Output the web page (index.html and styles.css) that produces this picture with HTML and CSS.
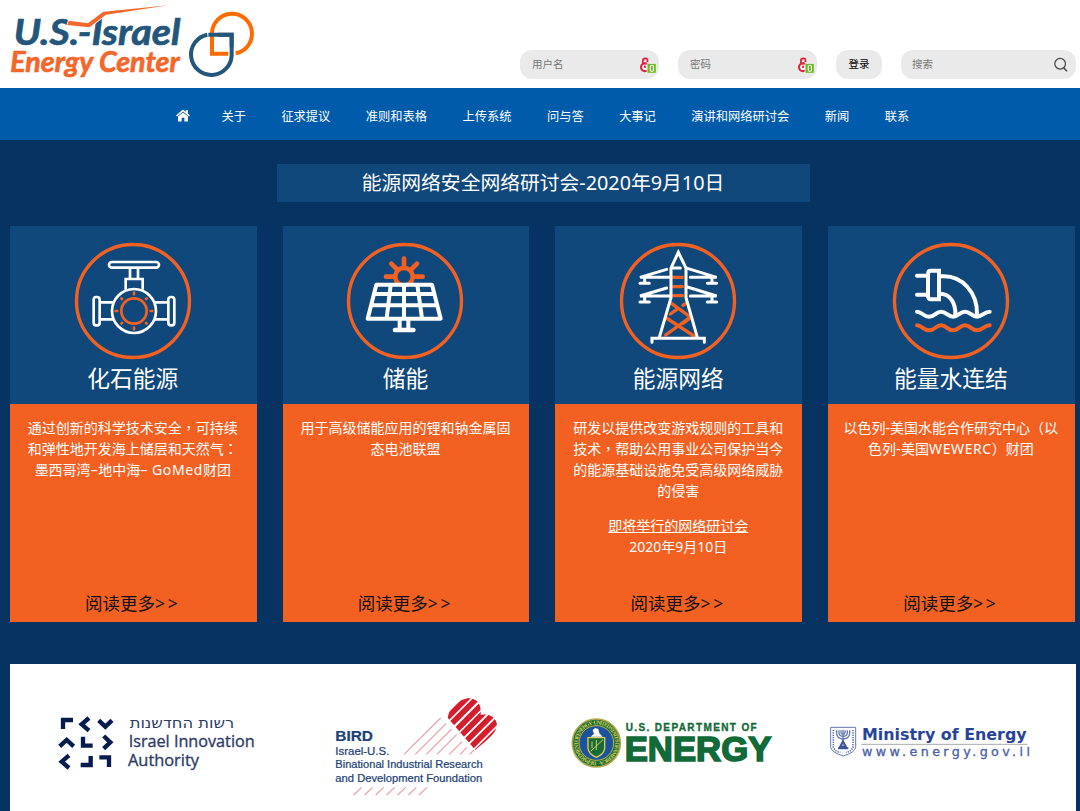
FILE: index.html
```html
<!DOCTYPE html>
<html lang="zh-CN">
<head>
<meta charset="utf-8">
<title>U.S.-Israel Energy Center</title>
<link rel="stylesheet" href="styles.css">
</head>
<body>
<header class="top">
  <svg class="logo" viewBox="0 0 810 264" width="270" height="88">
    <g font-family="Lato" font-weight="700" font-style="italic">
      <text x="41" y="136" font-size="106" fill="#24567c" stroke="#24567c" stroke-width="2" textLength="500" lengthAdjust="spacingAndGlyphs">U.S.-Israel</text>
      <text x="31" y="217" font-size="84" fill="#f4672b" stroke="#f4672b" stroke-width="2" textLength="508" lengthAdjust="spacingAndGlyphs">Energy Center</text>
    </g>
    <path d="M206 62 264 70 310 35 505 16 318 44 268 82 202 75Z" fill="#f4672b" stroke="#fff" stroke-width="5" paint-order="stroke"/>
    <g fill="none" stroke-width="12">
      <path d="M622 104A61 61 0 1 0 695 166V104H654" stroke="#24567c"/>
      <path d="M707 160A60 60 0 1 0 636 99V161H685" stroke="#ff6b00"/>
      <path d="M625 104H695V140" stroke="#24567c"/>
    </g>
  </svg>
  <form class="tools">
    <label class="field"><span>用户名</span>
      <svg class="lock" viewBox="0 0 48 48" width="17" height="17"><path d="M8 17V11Q8 4 15 4T21 11V14" fill="none" stroke="#e0203a" stroke-width="5"/><circle cx="14" cy="29" r="11" fill="#fff" stroke="#e0203a" stroke-width="6"/><path d="M14 24V31" stroke="#e0203a" stroke-width="5"/><path d="M20 18H46V46H20Z" fill="#6eb92b" stroke="#fff" stroke-width="2"/><rect x="29" y="24" width="9" height="16" rx="3" fill="none" stroke="#fff" stroke-width="3"/></svg>
    </label>
    <label class="field"><span>密码</span>
      <svg class="lock" viewBox="0 0 48 48" width="17" height="17"><path d="M8 17V11Q8 4 15 4T21 11V14" fill="none" stroke="#e0203a" stroke-width="5"/><circle cx="14" cy="29" r="11" fill="#fff" stroke="#e0203a" stroke-width="6"/><path d="M14 24V31" stroke="#e0203a" stroke-width="5"/><path d="M20 18H46V46H20Z" fill="#6eb92b" stroke="#fff" stroke-width="2"/><rect x="29" y="24" width="9" height="16" rx="3" fill="none" stroke="#fff" stroke-width="3"/></svg>
    </label>
    <button class="login" type="button">登录</button>
    <label class="field search"><span>搜索</span>
      <svg viewBox="0 0 42 45" width="15" height="16"><circle cx="20" cy="19" r="15" fill="none" stroke="#444" stroke-width="3.4"/><path d="M30 30 39 40" stroke="#444" stroke-width="4"/></svg>
    </label>
  </form>
</header>

<nav class="nav">
  <a class="home"><svg viewBox="0 0 42 38" width="14" height="13" fill="#fff"><path d="M0 19 18 3Q21 1 24 3L29 8V3H36V14L42 19 39 22 21 7 3 22Z"/><path d="M6 22 21 10 36 22V37H25V26H17V37H6Z"/></svg></a>
  <a>关于</a><a>征求提议</a><a>准则和表格</a><a>上传系统</a><a>问与答</a><a>大事记</a><a>演讲和网络研讨会</a><a>新闻</a><a>联系</a>
</nav>

<main class="main">
  <h1 class="banner">能源网络安全网络研讨会-2020年9月10日</h1>
  <section class="cards">
    <article class="card">
      <div class="head">
        <svg viewBox="219 64 360 360" width="120" height="120" fill="none" stroke="#fff" stroke-width="8">
          <circle cx="399" cy="244" r="169.500" stroke="#f26122" stroke-width="10"/>
          <rect x="327" y="127" width="150" height="17" rx="8.500"/>
          <path d="M390 146V177M414 146V177M377 210V178H428V210M300 248H342M300 299H342M462 248H504M462 299H504"/>
          <rect x="281" y="232" width="18" height="85" rx="8"/><rect x="505" y="232" width="18" height="85" rx="8"/>
          <circle cx="402" cy="274" r="66"/>
          <g stroke="#f26122"><circle cx="402" cy="274" r="38"/><path stroke-linecap="round" d="M402 219V224M402 324V329M347 274H352M452 274H457M364 236 366 238M440 236 438 238M364 312 366 310M440 312 438 310"/></g>
        </svg>
        <h2>化石能源</h2>
      </div>
      <div class="body"><p>通过创新的科学技术安全<i lang="zh-TW">，</i>可持续<br>和弹性地开发海上储层和天然气<i lang="zh-TW">：</i><br>墨西哥湾<span class="latin">–</span>地中海<span class="latin">– GoMed</span>财团</p><a class="more">阅读更多<span>&gt;&gt;</span></a></div>
    </article>
    <article class="card">
      <div class="head">
        <svg viewBox="213 64 360 360" width="120" height="120" fill="none" stroke="#fff" stroke-width="12" stroke-linecap="round" stroke-linejoin="round">
          <circle cx="393" cy="244" r="169.500" stroke="#f26122" stroke-width="10"/>
          <g stroke="#f26122" stroke-width="13"><circle cx="390" cy="171" r="26"/><path d="M390 117V138M352 132 368 148M429 132 413 148M336 171H360M422 171H446" stroke-width="14"/></g>
          <path d="M307 195H474L500 297H281ZM300 223H480M293 257H489M350 196 338 296M390 196V296M430 196 444 296M377 302V326M403 302V326"/><path d="M363 331H418" stroke-width="14"/>
        </svg>
        <h2>储能</h2>
      </div>
      <div class="body"><p>用于高级储能应用的锂和钠金属固<br>态电池联盟</p><a class="more">阅读更多<span>&gt;&gt;</span></a></div>
    </article>
    <article class="card">
      <div class="head">
        <svg viewBox="208 64 360 360" width="120" height="120" fill="none" stroke="#fff" stroke-width="9" stroke-linecap="round">
          <circle cx="388" cy="244" r="169.500" stroke="#f26122" stroke-width="10"/>
          <path stroke="#f26122" stroke-width="10" d="M374 173H401M374 201H401M374 228H401M365 249 421 289M365 283 388 267M403 257 412 251M353 295 439 351M351 346 423 294M403 311 421 298"/>
          <path d="M332 353 367 234V145L389 98 412 145V234L446 353M369 145H395M310 368V356H467V368M362 173H274L354 149M288 174V191M274 191H302M416 146 504 173H425M490 174V191M476 191H504M362 229H274L354 205M288 230V247M274 247H302M416 202 504 229H425M490 230V247M476 247H504"/>
        </svg>
        <h2>能源网络</h2>
      </div>
      <div class="body"><p>研发以提供改变游戏规则的工具和<br>技术<i lang="zh-TW">，</i>帮助公用事业公司保护当今<br>的能源基础设施免受高级网络威胁<br>的侵害</p><p><u>即将举行的网络研讨会</u><br>2020年9月10日</p><a class="more">阅读更多<span>&gt;&gt;</span></a></div>
    </article>
    <article class="card">
      <div class="head">
        <svg viewBox="216 64 360 360" width="120" height="120" fill="none" stroke="#fff" stroke-width="12" stroke-linecap="round">
          <circle cx="396" cy="244" r="169.500" stroke="#f26122" stroke-width="10"/>
          <path d="M360 153H336Q327 153 327 163V229Q327 239 336 239H360ZM294 168H326M294 225H326M366 170C430 165 476 220 474 285M366 222C393 224 411 250 409 287"/>
          <path d="M294 276C309 276 312 291 330 291S350 276 366 276 386 291 402 291 422 276 438 276 458 291 474 291 496 276 512 276"/>
          <path stroke="#f26122" d="M294 317C309 317 312 332 330 332S350 317 366 317 386 332 402 332 422 317 438 317 458 332 474 332 496 317 512 317"/>
        </svg>
        <h2>能量水连结</h2>
      </div>
      <div class="body"><p>以色列-美国水能合作研究中心<i lang="zh-TW">（</i>以<br>色列<span class="latin">-</span>美国<span class="latin">WEWERC</span><i lang="zh-TW">）</i>财团</p><a class="more">阅读更多<span>&gt;&gt;</span></a></div>
    </article>
  </section>

  <footer class="partners">
    <svg class="innovation" viewBox="0 0 720 330" width="240" height="110">
      <g fill="none" stroke="#061b4e" stroke-width="13">
        <path d="M69 117V90H99M147 84 125 103 147 122M176 91 196 110 216 91M59 169 80 150 101 169M129 140V167H158M191 138 211 157 191 176M87 196 65 215 87 234M152 198V225H122M178 202H207V231"/>
      </g>
      <g fill="#2d3b66" font-family="Open Sans, Noto Sans, sans-serif">
        <text x="269" y="115" font-size="42" font-family="DejaVu Sans, sans-serif" textLength="314" lengthAdjust="spacingAndGlyphs">רשות החדשנות</text>
        <text x="266" y="171" font-size="47" stroke="#2d3b66" textLength="378" lengthAdjust="spacingAndGlyphs">Israel Innovation</text>
        <text x="264" y="228" font-size="47" stroke="#2d3b66" textLength="213" lengthAdjust="spacingAndGlyphs">Authority</text>
      </g>
    </svg>
    <svg class="bird" viewBox="0 0 600 363" width="200" height="121">
      <defs><clipPath id="heart"><path d="M386 72C390 52 424 22 451 25 478 29 484 51 482 75 503 70 526 79 530 99 536 128 494 154 466 180L383 83Z"/></clipPath></defs>
      <g clip-path="url(#heart)" stroke="#d51d2c" stroke-width="17">
        <path d="M360 105 460 5M375 121 480 16M392 137 500 29M405 155 520 40M421 171 530 62M436 188 545 79M449 206 560 95"/>
      </g>
      <path d="M252 193 362 84M286 193 378 101M319 193 395 117M351 193 410 134M388 193 427 154M420 193 441 172M449 193 462 180M101 315 125 292M134 315 158 292M167 315 191 292M200 315 224 292M233 315 257 292M265 315 289 292M297 315 321 292" stroke="#eba0a6" stroke-width="3.500"/>
      <g fill="#1c4178" stroke="#1c4178" stroke-width=".7" font-family="Liberation Sans, sans-serif">
        <text x="46" y="153" font-size="46" font-weight="700" textLength="113" lengthAdjust="spacingAndGlyphs">BIRD</text>
        <text x="46" y="195" font-size="35" textLength="162" lengthAdjust="spacingAndGlyphs">Israel-U.S.</text>
        <text x="46" y="234" font-size="35" textLength="442" lengthAdjust="spacingAndGlyphs">Binational Industrial Research</text>
        <text x="46" y="275" font-size="35" textLength="441" lengthAdjust="spacingAndGlyphs">and Development Foundation</text>
      </g>
    </svg>
    <svg class="doe" viewBox="0 0 690 240" width="230" height="80">
      <defs><path id="ring" d="M109 185A56 56 0 1 1 110 185"/></defs>
      <circle cx="109" cy="129" r="72" fill="#176b36" stroke="#b5a84a" stroke-width="5"/>
      <text font-family="Liberation Serif, serif" font-weight="700" font-size="17" fill="#d8cc58"><textPath href="#ring" textLength="345">DEPARTMENT OF ENERGY · UNITED STATES OF AMERICA ·</textPath></text>
      <circle cx="109" cy="129" r="52" fill="#1d529f" stroke="#c4b649" stroke-width="3"/>
      <path d="M84 113H134V145Q132 163 109 172 86 163 84 145Z" fill="#176b36" stroke="#d8cc58" stroke-width="4"/>
      <path d="M92 154 129 119M109 120V150M96 125V145" stroke="#d8cc58" stroke-width="3"/>
      <path d="M92 110 102 101 98 91 105 84 115 87 118 100 128 110Z" fill="#fff"/>
      <g fill="#116a38" font-family="Liberation Sans, sans-serif" font-weight="700">
        <text x="197" y="93" font-size="30" stroke="#116a38" textLength="393">U.S. DEPARTMENT OF</text>
        <text x="194" y="184" font-size="107" textLength="440" lengthAdjust="spacingAndGlyphs" stroke="#116a38" stroke-width="5">ENERGY</text>
      </g>
    </svg>
    <svg class="ministry" viewBox="0 0 660 180" width="220" height="60">
      <g fill="none" stroke="#6879b0" stroke-width="3">
        <path d="M32 52H107V112Q105 127 70 138 35 127 32 112Z"/>
        <path d="M40 60V112Q45 124 61 127M99 60V112Q94 124 78 127" stroke-width="5" stroke-dasharray="4 3"/>
        <path d="M50 61V71Q52 87 69 87 87 87 89 71V61M57 61V69Q58 79 69 79 81 79 82 69V61M63 61V68Q65 73 69 73 74 73 75 68V61M69 59V111" stroke-width="4"/>
        <path d="M60 111 69 94 78 111ZM54 115H85" stroke="#3f5499" stroke-width="6"/>
      </g>
      <path d="M124 103H622" stroke="#aaa" stroke-width="3"/>
      <g fill="#27439a" font-family="DejaVu Sans, sans-serif">
        <text x="126" y="89" font-size="48" font-weight="700" textLength="494" lengthAdjust="spacingAndGlyphs">Ministry of Energy</text>
        <text x="126" y="139" font-size="38" fill="#4b60a8" stroke="#4b60a8" textLength="504">www.energy.gov.il</text>
      </g>
    </svg>
  </footer>
</main>
</body>
</html>
```
FILE: styles.css
```css
* { box-sizing: border-box; }
body { margin: 0; width: 1080px; height: 811px; overflow: hidden; background: #073363; font-family: "Noto Sans", "Noto Sans CJK SC", sans-serif; }
svg { display: block; flex: none; }

.top { display: flex; height: 88px; background: #fff; }
.tools { display: flex; margin: 50px 0 0 250px; height: 29px; font-size: 10.500px; line-height: 29px; }
.field { display: flex; align-items: center; justify-content: space-between; width: 139px; margin-right: 19px; padding: 0 2px 0 12px; border-radius: 12px; background: #eaeaea; color: #757575; }
.lock { margin-top: 1px; }
.login { width: 46px; margin-right: 19px; padding: 0; border: 0; border-radius: 12px; background: #eaeaea; color: #000; font: inherit; }
.search { width: 175px; margin: 0; padding: 0 8px 0 11px; }

.nav { display: flex; align-items: center; gap: 35.450px; height: 52px; padding: 3px 0 0 176px; background: #005bab; color: #fff; font-size: 12.250px; white-space: nowrap; }
.home { margin-right: -4px; }

.main { padding: 24px 4px 0 10px; }
.banner { width: 533px; height: 38px; margin: 0 0 24px 266.500px; background: #10487c; color: #fff; font-size: 19.800px; font-weight: 400; line-height: 37px; text-align: center; }
.cards { display: grid; grid-template-columns: repeat(4, 246.600px); column-gap: 26.100px; height: 396px; }
.card { display: flex; flex-direction: column; color: #fff; text-align: center; }
.head { display: flex; flex-direction: column; align-items: center; height: 178px; padding: 15px 1px 0 0; background: #10487c; }
.head h2 { margin: 1px 0 0; font-size: 22.750px; font-weight: 400; line-height: 34px; white-space: nowrap; }
.body { display: flex; flex-direction: column; flex: 1; padding: 13px 1px 4px 0; background: #f26122; font-size: 14px; line-height: 21px; white-space: nowrap; }
.body p { margin: 0 0 14px; }
.body i { font-family: "Noto Sans CJK TC", sans-serif; font-style: normal; }
.latin { letter-spacing: .6px; }
.more { margin-top: auto; color: #111; font-size: 17.500px; line-height: 30px; }
.more span { letter-spacing: 2.700px; }

.partners { display: flex; align-items: flex-start; height: 147px; margin-top: 42px; padding: 26px 0 0 30px; background: #fff; }
.bird { margin-left: 40px; }
.doe { margin: 10px 0 0 40px; }
.ministry { margin: 20px 0 0 30px; }
```
